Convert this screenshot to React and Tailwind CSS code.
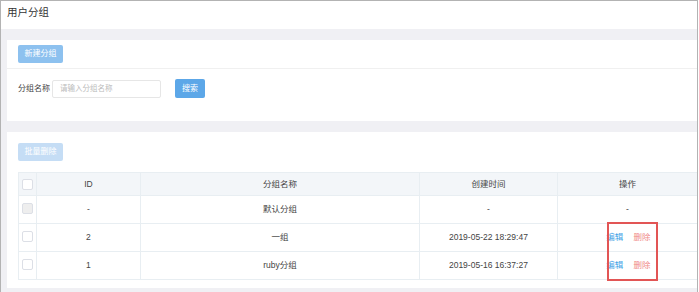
import React from 'react';

const font = { fontFamily: '"Liberation Sans", "Noto Sans CJK SC", sans-serif' };

const rows = [
  { id: '-', name: '默认分组', time: '-', ops: false },
  { id: '2', name: '一组', time: '2019-05-22 18:29:47', ops: true },
  { id: '1', name: 'ruby分组', time: '2019-05-16 16:37:27', ops: true },
];

const Checkbox = ({ disabled }) => (
  <span
    className={`block w-[11px] h-[11px] rounded-[2px] border border-[#dcdfe6] ${disabled ? 'bg-[#eeeeee]' : 'bg-white'}`}
  />
);

const App = () => {
  return (
    <div
      className="w-[698px] h-[292px] border-l border-t border-r border-[#b3b3b3] bg-[#f0f0f4] flex flex-col overflow-hidden relative"
      style={font}
    >
      <div className="h-[28px] bg-white flex items-start pt-[4px] pl-[6px] text-[10.5px] text-[#333] shrink-0">
        用户分组
      </div>

      <div className="pl-[6px] pt-[11px] flex flex-col gap-[11px]">
        {/* search card */}
        <div className="bg-white h-[81px] flex flex-col">
          <div className="h-[29px] border-b border-[#f0f0f0] pl-[11px] pt-[5px] flex items-start">
            <button className="block w-[45px] h-[18px] rounded-[2px] bg-[#8dc1ef] text-white text-[8px] leading-none">
              新建分组
            </button>
          </div>
          <div className="flex items-center pl-[11px] pt-[10px]">
            <span className="text-[8px] text-[#444] w-[34px]">分组名称</span>
            <div className="w-[109px] h-[18px] border border-[#e6e6e6] rounded-[2px] flex items-center pl-[7px] text-[7.5px] text-[#bbbbbb]">
              请输入分组名称
            </div>
            <button className="block ml-[14px] w-[30px] h-[19px] rounded-[2px] bg-[#5ca7e8] text-white text-[8px] leading-none">
              搜索
            </button>
          </div>
        </div>

        {/* table card */}
        <div className="bg-white h-[156px] pl-[11px] pt-[11px] flex flex-col items-start">
          <button className="block w-[45px] h-[18px] rounded-[2px] bg-[#c5ddf5] text-white text-[8px] leading-none">
            批量删除
          </button>
          <table className="mt-[11px] border-collapse table-fixed text-[8.5px] text-[#444]">
            <colgroup>
              <col className="w-[18px]" />
              <col className="w-[104px]" />
              <col className="w-[280px]" />
              <col className="w-[138px]" />
              <col className="w-[140px]" />
            </colgroup>
            <thead>
              <tr className="h-[23px] bg-[#f3f6f9]">
                <th className="border border-[#e8eef2] px-[3px] p-0">
                  <Checkbox />
                </th>
                <th className="border border-[#e8eef2] font-normal p-0">ID</th>
                <th className="border border-[#e8eef2] font-normal p-0">分组名称</th>
                <th className="border border-[#e8eef2] font-normal p-0">创建时间</th>
                <th className="border border-[#e8eef2] border-r-0 font-normal p-0">操作</th>
              </tr>
            </thead>
            <tbody>
              {rows.map((r, i) => (
                <tr key={i} className="h-[28px]">
                  <td className="border border-[#e8eef2] px-[3px] pb-[3px]">
                    <Checkbox disabled={i === 0} />
                  </td>
                  <td className="border border-[#e8eef2] text-center">{r.id}</td>
                  <td className="border border-[#e8eef2] text-center">{r.name}</td>
                  <td className="border border-[#e8eef2] text-center">{r.time}</td>
                  <td className="border border-[#e8eef2] border-r-0 text-center">
                    {r.ops ? (
                      <span className="inline-flex gap-[10px] pl-[2px]">
                        <span className="text-[#3fa2e6]">编辑</span>
                        <span className="text-[#f08a8a]">删除</span>
                      </span>
                    ) : (
                      '-'
                    )}
                  </td>
                </tr>
              ))}
            </tbody>
          </table>
        </div>
      </div>

      {/* annotation box */}
      <div className="absolute left-[606px] top-[221px] w-[51px] h-[59px] border-2 border-[#e25555]" />
    </div>
  );
};

export default App;
